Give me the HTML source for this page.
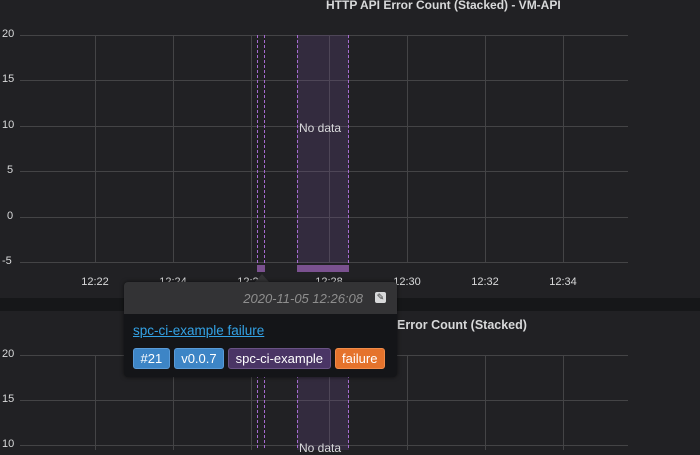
<!DOCTYPE html>
<html><head><style>
body{margin:0;width:700px;height:450px;overflow:hidden;background:#212124;font-family:"Liberation Sans",sans-serif;position:relative}
.t{position:absolute;color:#d8d9da;font-size:11px;white-space:nowrap}
.y{position:absolute;color:#d8d9da;font-size:11px;left:2px}
.x{position:absolute;color:#d8d9da;font-size:11px;top:276px;transform:translateX(-50%)}
.tag{display:inline-block;height:21px;line-height:20px;padding:0 6.5px;border-radius:3px;color:#fff;font-size:13px;margin-right:4px;box-sizing:border-box}
</style></head><body>
<svg width="700" height="450" style="position:absolute;left:0;top:0">
<rect x="0" y="298" width="700" height="13" fill="#161719"/>
<g stroke="#444446" stroke-width="1">
<line x1="20" y1="35.5" x2="628" y2="35.5"/><line x1="20" y1="80.5" x2="628" y2="80.5"/>
<line x1="20" y1="126.5" x2="628" y2="126.5"/><line x1="20" y1="171.5" x2="628" y2="171.5"/>
<line x1="20" y1="217.5" x2="628" y2="217.5"/><line x1="20" y1="262.5" x2="628" y2="262.5"/>
<line x1="95.5" y1="35" x2="95.5" y2="263"/><line x1="173.5" y1="35" x2="173.5" y2="263"/>
<line x1="251.5" y1="35" x2="251.5" y2="263"/><line x1="329.5" y1="35" x2="329.5" y2="263"/>
<line x1="407.5" y1="35" x2="407.5" y2="263"/><line x1="485.5" y1="35" x2="485.5" y2="263"/>
<line x1="563.5" y1="35" x2="563.5" y2="263"/>
<line x1="20" y1="355.5" x2="628" y2="355.5"/><line x1="20" y1="400.5" x2="628" y2="400.5"/><line x1="20" y1="445.5" x2="628" y2="445.5"/>
<line x1="95.5" y1="355" x2="95.5" y2="450"/><line x1="173.5" y1="355" x2="173.5" y2="450"/>
<line x1="251.5" y1="355" x2="251.5" y2="450"/><line x1="329.5" y1="355" x2="329.5" y2="450"/>
<line x1="407.5" y1="355" x2="407.5" y2="450"/><line x1="485.5" y1="355" x2="485.5" y2="450"/>
<line x1="563.5" y1="355" x2="563.5" y2="450"/>
</g>
<rect x="297" y="35" width="52" height="228" fill="#6d4c8a" fill-opacity="0.25"/>
<rect x="297" y="355" width="52" height="95" fill="#6d4c8a" fill-opacity="0.25"/>
<g stroke="#a66bd1" stroke-dasharray="3,2" stroke-width="1">
<line x1="257.5" y1="35" x2="257.5" y2="265"/><line x1="264.5" y1="35" x2="264.5" y2="265"/>
<line x1="297.5" y1="35" x2="297.5" y2="265"/><line x1="348.5" y1="35" x2="348.5" y2="265"/>
<line x1="257.5" y1="355" x2="257.5" y2="450"/><line x1="264.5" y1="355" x2="264.5" y2="450"/>
<line x1="297.5" y1="355" x2="297.5" y2="450"/><line x1="348.5" y1="355" x2="348.5" y2="450"/>
</g>
<rect x="257" y="265" width="8" height="7" fill="#7a518f"/>
<rect x="297" y="265" width="52" height="7" fill="#7a518f"/>
</svg>
<div class="t" style="left:326px;top:-2px;font-size:12px;font-weight:bold">HTTP API Error Count (Stacked) - VM-API</div>
<div class="y" style="top:28px">20</div><div class="y" style="top:73px">15</div><div class="y" style="top:119px">10</div>
<div class="y" style="top:164px;left:7px">5</div><div class="y" style="top:210px;left:7px">0</div><div class="y" style="top:255px">-5</div>
<div class="x" style="left:95px">12:22</div><div class="x" style="left:173px">12:24</div><div class="x" style="left:251px">12:26</div>
<div class="x" style="left:329px">12:28</div><div class="x" style="left:407px">12:30</div><div class="x" style="left:485px">12:32</div><div class="x" style="left:563px">12:34</div>
<div class="t" style="left:299px;top:121px;font-size:12px">No data</div>
<div class="t" style="left:299px;top:441px;font-size:12px">No data</div>
<div class="t" style="left:329px;top:318px;font-size:12.5px;font-weight:bold">Instrument Error Count (Stacked)</div>
<div class="y" style="top:348px">20</div><div class="y" style="top:393px">15</div><div class="y" style="top:438px">10</div>
<div style="position:absolute;left:255px;top:274px;width:0;height:0;border-left:7px solid transparent;border-right:7px solid transparent;border-bottom:8px solid #333335"></div>
<div style="position:absolute;left:124px;top:282px;width:273px;height:95px;background:#141518;border-radius:4px;overflow:hidden;box-shadow:0 0 4px rgba(0,0,0,.6)">
<div style="height:32px;background:#333335;position:relative">
<span style="position:absolute;right:34px;top:9px;color:#8e8e8e;font-style:italic;font-size:13px">2020-11-05 12:26:08</span>
<span style="position:absolute;right:11px;top:10px;width:11px;height:11px;background:#d8d9da;border-radius:2px;font-size:9px;line-height:11px;text-align:center;color:#333">✎</span>
</div>
<div style="position:absolute;left:9px;top:41px;color:#33a2e5;font-size:13.5px;text-decoration:underline">spc-ci-example failure</div>
<div style="position:absolute;left:9px;top:66px;white-space:nowrap">
<span class="tag" style="background:#3d85c6;border:1px solid #5a9bd8">#21</span><span class="tag" style="background:#3d85c6;border:1px solid #5a9bd8">v0.0.7</span><span class="tag" style="background:#4a3565;border:1px solid #6a5385">spc-ci-example</span><span class="tag" style="background:#e5732c;border:1px solid #f08c4a">failure</span>
</div>
</div>
</body></html>
